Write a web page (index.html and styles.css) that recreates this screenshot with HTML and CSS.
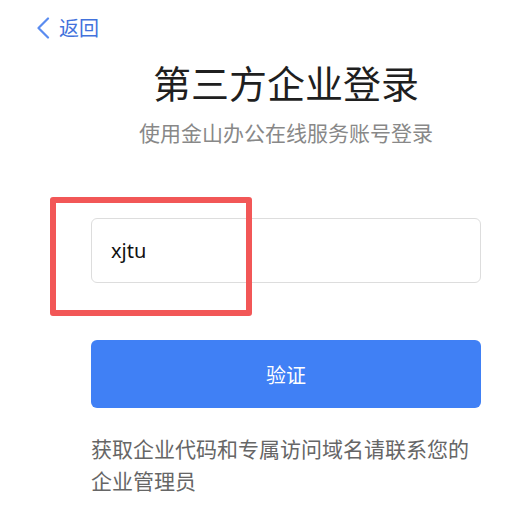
FILE: index.html
```html
<!DOCTYPE html>
<html lang="zh-CN">
<head>
  <meta charset="UTF-8">
  <title>第三方企业登录</title>
  <link rel="stylesheet" href="styles.css">
</head>
<body>

  <a class="back" href="#">
    <svg class="back-icon" width="14" height="22" viewBox="0 0 14 22">
      <polyline points="12,1.5 2.5,11 12,20.5" fill="none" stroke="#5a8cf0" stroke-width="2.2" stroke-linecap="round" stroke-linejoin="round"/>
    </svg>
    <span>返回</span>
  </a>

  <div class="login">
    <h1>第三方企业登录</h1>
    <p class="sub">使用金山办公在线服务账号登录</p>

    <div class="field">
      <input type="text" value="xjtu">
      <!-- 标注框 -->
      <div class="mark"></div>
    </div>

    <button class="verify">验证</button>

    <p class="tip">获取企业代码和专属访问域名请联系您的企业管理员</p>
  </div>

</body>
</html>
```

FILE: styles.css
```css
body {
  margin: 0;
  background: #fff;
  font-family: "Noto Sans CJK SC", "Noto Sans", sans-serif;
  color: #222;
}

.back {
  display: flex;
  align-items: center;
  gap: 9px;
  padding: 14px 0 0 36px;
  height: 28px;
  color: #4272dc;
  font-size: 20px;
  line-height: 28px;
  text-decoration: none;
}

.back-icon {
  display: block;
}

.login {
  width: 390px;
  margin-left: 91px;
}

h1 {
  margin: 16px 0 0;
  font-size: 38px;
  font-weight: normal;
  line-height: 48px;
  text-align: center;
  color: #1f1f1f;
}

.sub {
  margin: 11px 0 0;
  font-size: 21px;
  line-height: 30px;
  text-align: center;
  color: #888;
}

.field {
  position: relative;
  margin-top: 71px;
}

.field input {
  box-sizing: border-box;
  display: block;
  width: 100%;
  height: 65px;
  padding: 0 19px;
  border: 1px solid #ddd;
  border-radius: 6px;
  font-family: "Noto Sans", "Noto Sans CJK SC", sans-serif;
  font-size: 20px;
  color: #111;
  outline: none;
}

.mark {
  position: absolute;
  left: -41px;
  top: -21px;
  width: 190px;
  height: 107px;
  border: 6px solid #f25757;
  border-radius: 3px;
  pointer-events: none;
}

.verify {
  display: block;
  width: 100%;
  height: 68px;
  margin-top: 57px;
  border: none;
  border-radius: 6px;
  background-color: #4080f5;
  color: #fff;
  font-family: inherit;
  font-size: 20px;
  cursor: pointer;
}

.tip {
  margin: 24px 0 0;
  font-size: 21px;
  line-height: 32px;
  color: #666;
}
```
